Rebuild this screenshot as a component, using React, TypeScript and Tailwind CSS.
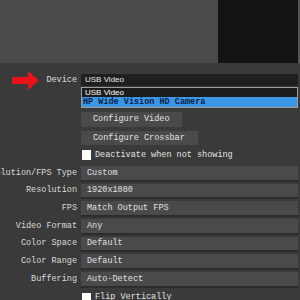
import React from "react";

const mono = "font-['Liberation_Mono','DejaVu_Sans_Mono',monospace]";
const sans = "font-['Liberation_Sans',Arial,sans-serif]";

const fields: [string, string][] = [
  ["Resolution/FPS Type", "Custom"],
  ["Resolution", "1920x1080"],
  ["FPS", "Match Output FPS"],
  ["Video Format", "Any"],
  ["Color Space", "Default"],
  ["Color Range", "Default"],
  ["Buffering", "Auto-Detect"],
];

function Label({ text }: { text: string }) {
  return (
    <div className="flex w-[77px] justify-end whitespace-nowrap text-[#dadada]">
      {text}
    </div>
  );
}

export default function App() {
  return (
    <div
      className={`relative h-[300px] w-[300px] overflow-hidden bg-[#3a3a3a] text-[8.5px] leading-none ${mono}`}
    >
      {/* preview area */}
      <div className="flex h-[63px]">
        <div className="w-[218px] bg-[#4b4b4b]" />
        <div className="w-[80px] bg-[#131313]" />
        <div className="flex-1 bg-[#555555]" />
      </div>

      <div className="flex flex-col pr-[2px]">
        {/* Device */}
        <div className="mt-[11px] flex h-[12px] items-center gap-[4px]">
          <Label text="Device" />
          <div
            className={`flex h-full flex-1 items-center bg-[#1f1f1f] pl-[4px] text-[8px] text-[#e8e8e8] ${sans}`}
          >
            USB Video
          </div>
        </div>

        {/* buttons */}
        <div className="mt-[26px] flex gap-[4px]">
          <div className="w-[77px]" />
          <div className="flex h-[15px] w-[101px] items-center rounded-[1px] bg-[#4a4a4a] pl-[12px] text-[#e2e2e2]">
            Configure Video
          </div>
        </div>
        <div className="mt-[4px] flex gap-[4px]">
          <div className="w-[77px]" />
          <div className="flex h-[14px] w-[117px] items-center rounded-[1px] bg-[#4a4a4a] pl-[12px] text-[#e2e2e2]">
            Configure Crossbar
          </div>
        </div>

        {/* checkbox */}
        <div className="mt-[5px] flex h-[10px] items-center gap-[4px]">
          <div className="w-[77px]" />
          <div className="flex items-center gap-[4px] text-[#e2e2e2]">
            <div className="ml-[1px] h-[10px] w-[9px] bg-white" />
            Deactivate when not showing
          </div>
        </div>

        {/* property fields */}
        <div className="mt-[6px] flex flex-col gap-[2px]">
          {fields.map(([label, value]) => (
            <div key={label} className="flex items-start gap-[4px]">
              <div className="flex h-[13.67px] items-center">
                <Label text={label} />
              </div>
              <div className="flex h-[15.67px] flex-1 items-center border-b-2 border-[#2d2d2d] bg-[#4a4a4a] pl-[6px] text-[#e0e0e0]">
                {value}
              </div>
            </div>
          ))}
        </div>

        {/* flip vertically */}
        <div className="mt-[5px] flex h-[10px] items-center gap-[4px]">
          <div className="w-[77px]" />
          <div className="flex items-center gap-[4px] text-[#e2e2e2]">
            <div className="ml-[1px] h-[10px] w-[9px] bg-white" />
            Flip Vertically
          </div>
        </div>
      </div>

      {/* open dropdown list */}
      <div className="absolute left-[81px] top-[87px] w-[217px] border border-[#9c9c9c] bg-[#1c1c1c]">
        <div className={`flex h-[9px] items-center pl-[3px] text-[8px] text-white ${sans}`}>
          USB Video
        </div>
        <div className="flex h-[10px] items-center bg-[#3b97e6] pl-[1px] font-bold text-[#0d1c45]">
          HP Wide Vision HD Camera
        </div>
      </div>

      {/* red annotation arrow */}
      <svg
        className="absolute left-[12px] top-[71px]"
        width="27"
        height="20"
        viewBox="0 0 27 20"
      >
        <path d="M0 6 H16 V0 L27 9.5 L16 19 V13 H0 Z" fill="#e8121a" />
      </svg>
    </div>
  );
}
